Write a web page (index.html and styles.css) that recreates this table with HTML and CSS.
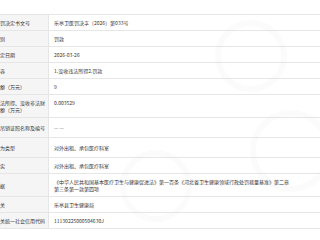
FILE: index.html
```html
<!DOCTYPE html>
<html lang="zh-CN">
<head>
<meta charset="utf-8">
<link rel="stylesheet" href="styles.css">
</head>
<body>
<div class="page">
  <div class="table">
    <div class="row"><div class="label">行政处罚决定书文号</div><div class="value">乐亭卫医罚决字〔2026〕第033号</div></div>
    <div class="row"><div class="label">处罚类别</div><div class="value">罚款</div></div>
    <div class="row"><div class="label">处罚决定日期</div><div class="value">2026-03-26</div></div>
    <div class="row"><div class="label">处罚内容</div><div class="value">1.没收违法所得2.罚款</div></div>
    <div class="row"><div class="label">罚款金额（万元）</div><div class="value">9</div></div>
    <div class="row row-tall"><div class="label">没收违法所得、没收非法财物的金额（万元）</div><div class="value value-top">0.003529</div></div>
    <div class="row row-mid"><div class="label">暂扣或吊销证照名称及编号</div><div class="value muted">— —</div></div>
    <div class="row row-mid"><div class="label">违法行为类型</div><div class="value">对外出租、承包医疗科室</div></div>
    <div class="row"><div class="label">违法事实</div><div class="value">对外出租、承包医疗科室</div></div>
    <div class="row row-tall"><div class="label">处罚依据</div><div class="value">《中华人民共和国基本医疗卫生与健康促进法》第一百条《河北省卫生健康领域行政处罚裁量基准》第二章第三条第一款第四项</div></div>
    <div class="row"><div class="label">处罚机关</div><div class="value">乐亭县卫生健康局</div></div>
    <div class="row"><div class="label">处罚机关统一社会信用代码</div><div class="value">11130225000504630J</div></div>
  </div>
  <div class="watermark" aria-hidden="true">
    <span class="seal seal-a"></span>
    <span class="seal seal-b"></span>
    <span class="seal seal-c"></span>
  </div>
</div>
</body>
</html>
```
FILE: styles.css
```css
html, body {
  margin: 0;
  padding: 0;
  background: #ffffff;
  overflow: hidden;
}

.page {
  position: relative;
  width: 320px;
  height: 240px;
  padding-top: 14px;
  box-sizing: border-box;
  font-family: "Noto Sans CJK SC", "Noto Sans", sans-serif;
  font-size: 5px;
  line-height: 7px;
  color: #333333;
}

.table {
  margin-left: -18px;
  width: 338px;
  border-top: 1px solid #e6e6e6;
}

.row {
  display: grid;
  grid-template-columns: 67px 1fr;
  min-height: 15px;
  border-bottom: 1px solid #e6e6e6;
}

.row-mid {
  min-height: 19px;
}

.row-tall {
  min-height: 22px;
}

.label {
  display: flex;
  align-items: center;
  padding: 0 3px;
  background: #f5f5f5;
  border-right: 1px solid #e6e6e6;
}

.value {
  display: flex;
  align-items: center;
  padding: 0 29px 0 5px;
  background: #ffffff;
}

.value-top {
  align-items: flex-start;
  padding-top: 4px;
}

.muted {
  color: #666666;
}

.watermark {
  position: absolute;
  inset: 0;
  pointer-events: none;
}

.seal {
  position: absolute;
  border-radius: 50%;
  border: 6px solid rgba(200, 200, 200, 0.08);
}

.seal-a { left: 215px; top: 20px; width: 60px; height: 60px; }
.seal-b { left: 250px; top: 110px; width: 70px; height: 70px; }
.seal-c { left: 120px; top: 150px; width: 60px; height: 60px; }
```
